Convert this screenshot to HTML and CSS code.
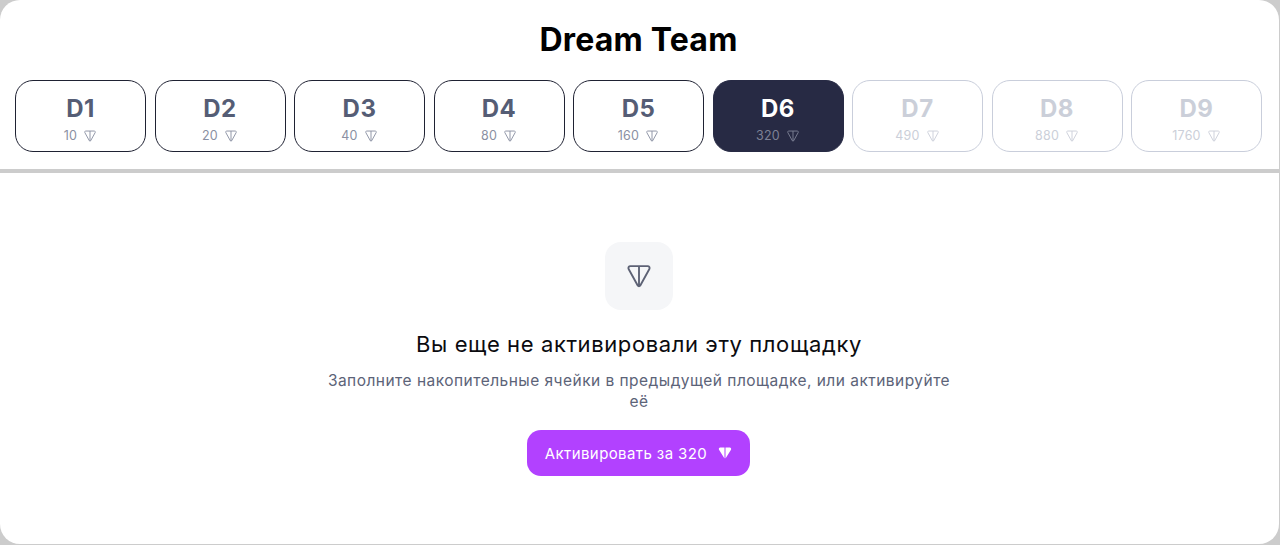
FILE: index.html
```html
<!DOCTYPE html>
<html>
<head>
<meta charset="utf-8">
<link rel="stylesheet" href="styles.css">
</head>
<body>

<svg class="defs" width="0" height="0">
  <symbol id="ton" viewBox="0 0 24 24">
    <path d="M4.600 3.500h14.800c1.300 0 2.100 1.400 1.500 2.500l-7.800 14.200c-.5.8-1.700.8-2.200 0L3.100 6c-.6-1.100.2-2.500 1.500-2.500zM12 3.500v17.200" fill="none" stroke="currentColor" stroke-width="1.600" stroke-linejoin="round"/>
  </symbol>
</svg>

<div class="panel">
  <header class="top">
    <h1>Dream Team</h1>
    <div class="levels">
      <div class="level"><b>D1</b><span class="price">10 <svg class="ton"><use href="#ton"/></svg></span></div>
      <div class="level"><b>D2</b><span class="price">20 <svg class="ton"><use href="#ton"/></svg></span></div>
      <div class="level"><b>D3</b><span class="price">40 <svg class="ton"><use href="#ton"/></svg></span></div>
      <div class="level"><b>D4</b><span class="price">80 <svg class="ton"><use href="#ton"/></svg></span></div>
      <div class="level"><b>D5</b><span class="price">160 <svg class="ton"><use href="#ton"/></svg></span></div>
      <div class="level active"><b>D6</b><span class="price">320 <svg class="ton"><use href="#ton"/></svg></span></div>
      <div class="level locked"><b>D7</b><span class="price">490 <svg class="ton"><use href="#ton"/></svg></span></div>
      <div class="level locked"><b>D8</b><span class="price">880 <svg class="ton"><use href="#ton"/></svg></span></div>
      <div class="level locked"><b>D9</b><span class="price">1760 <svg class="ton"><use href="#ton"/></svg></span></div>
    </div>
  </header>

  <main class="empty">
    <div class="empty-icon"><svg class="ton-big"><use href="#ton"/></svg></div>
    <h2>Вы еще не активировали эту площадку</h2>
    <p>Заполните накопительные ячейки в предыдущей площадке, или активируйте её</p>
    <button class="activate">Активировать за 320
      <svg class="ton-solid" viewBox="0 0 14 14"><path d="M2.200 1.500h4.300v10.900L1 3.800C.5 2.800 1.100 1.500 2.200 1.500zM7.500 1.500h4.300c1.100 0 1.700 1.300 1.200 2.300L7.500 12.400z" fill="currentColor"/></svg>
    </button>
  </main>
</div>

</body>
</html>
```

FILE: styles.css
```css
html, body {
  height: 100%;
}

body {
  margin: 0;
  background-color: #cccccc;
  font-family: Inter, "Liberation Sans", sans-serif;
  overflow: hidden;
}

.defs {
  display: block;
  height: 0;
}

.panel {
  width: 1279px;
  height: 544px;
  background-color: #fff;
  border-radius: 20px;
  display: flex;
  flex-direction: column;
}

.top {
  height: 169px;
  padding: 0 17px 0 15px;
  border-bottom: 4px solid #cccccc;
}

h1 {
  margin: 0;
  padding: 21px 0 0 0;
  height: 80px;
  box-sizing: border-box;
  font-size: 32px;
  line-height: 38px;
  font-weight: 700;
  letter-spacing: .2px;
  text-align: center;
  color: #000;
}

.levels {
  display: flex;
  gap: 8.500px;
}

.level {
  flex: 1;
  height: 72px;
  box-sizing: border-box;
  border: 1px solid #1f2233;
  border-radius: 18px;
  display: flex;
  flex-direction: column;
  align-items: center;
  padding-top: 14px;
}

.level b {
  font-size: 24px;
  line-height: 28px;
  font-weight: 700;
  letter-spacing: .5px;
  color: #555d75;
}

.price {
  display: flex;
  align-items: center;
  gap: 6px;
  margin-top: 5px;
  font-size: 12.500px;
  line-height: 16px;
  letter-spacing: .2px;
  color: #8a90a2;
}

.ton {
  width: 14px;
  height: 14px;
}

.active {
  background-color: #272a44;
  border-color: #272a44;
}

.active b {
  color: #fff;
}

.active .price {
  color: #7d8196;
}

.locked {
  border-color: #c9cedb;
}

.locked b {
  color: #cbcfd9;
}

.locked .price {
  color: #cbcfd9;
}

.empty {
  display: flex;
  flex-direction: column;
  align-items: center;
  padding: 69px 1px 0 0;
}

.empty-icon {
  width: 68px;
  height: 68px;
  border-radius: 16px;
  background-color: #f5f6f8;
  display: flex;
  align-items: center;
  justify-content: center;
  color: #5d6275;
}

.ton-big {
  width: 28px;
  height: 28px;
}

h2 {
  margin: 20px 0 0;
  font-size: 22px;
  line-height: 28px;
  font-weight: 400;
  letter-spacing: .6px;
  color: #0b0b0f;
}

p {
  margin: 12px 0 0;
  width: 630px;
  font-size: 15.500px;
  line-height: 21px;
  letter-spacing: .47px;
  text-align: center;
  color: #5c6378;
}

.activate {
  margin: 18px 1px 0 0;
  width: 223px;
  height: 46px;
  border: none;
  border-radius: 14px;
  background-color: #b241ff;
  color: #fff;
  font-family: inherit;
  font-size: 15px;
  letter-spacing: .4px;
  display: flex;
  align-items: center;
  justify-content: center;
  gap: 11px;
}

.ton-solid {
  width: 14px;
  height: 14px;
}
```
